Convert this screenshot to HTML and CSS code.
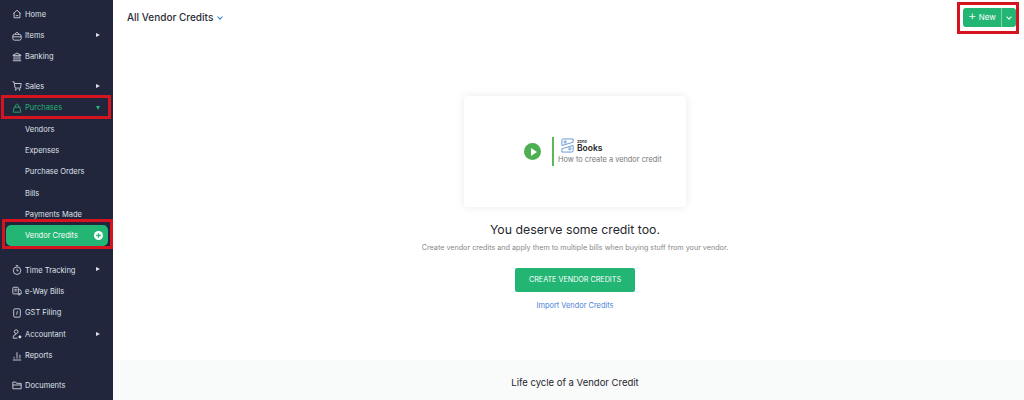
FILE: index.html
```html
<!DOCTYPE html>
<html>

<head>
    <meta charset="UTF-8">
    <title>All Vendor Credits</title>
    <link rel="stylesheet" href="styles.css">
</head>

<body>
    <div class="app">
        <!-- Sidebar -->
        <nav class="sidebar">
            <ul class="nav-group">
                <li class="nav-item">
                    <svg class="nav-icon" viewBox="0 0 12 12"><path d="M1.5 5.5 6 1.500l4.500 4M2.500 4.800v5.700h7V4.800M4.500 8h3"/></svg>
                    Home
                </li>
                <li class="nav-item">
                    <svg class="nav-icon" viewBox="0 0 12 12"><rect x="1" y="4" width="10" height="7" rx="2"/><path d="M4 4c0-3 4-3 4 0M1 7h10"/></svg>
                    Items
                    <span class="arrow-right"></span>
                </li>
                <li class="nav-item">
                    <svg class="nav-icon" viewBox="0 0 12 12"><path d="M1 4 6 1.200l5 2.800zM2.500 4.500v5M4.800 4.500v5M7.200 4.500v5M9.500 4.500v5M1 10.500h10"/></svg>
                    Banking
                </li>
            </ul>
            <ul class="nav-group">
                <li class="nav-item">
                    <svg class="nav-icon" viewBox="0 0 12 12"><path d="M.5 1h2l1.200 7.500h6.500L11 3H3"/><circle cx="4.500" cy="10.500" r=".6"/><circle cx="9" cy="10.500" r=".6"/></svg>
                    Sales
                    <span class="arrow-right"></span>
                </li>
                <li class="nav-item nav-active">
                    <svg class="nav-icon" viewBox="0 0 12 12"><path d="M2.500 5h7l1 6h-9zM4 5c0-5 4-5 4 0"/></svg>
                    Purchases
                    <span class="arrow-down"></span>
                </li>
                <li class="nav-item nav-sub">Vendors</li>
                <li class="nav-item nav-sub">Expenses</li>
                <li class="nav-item nav-sub">Purchase Orders</li>
                <li class="nav-item nav-sub">Bills</li>
                <li class="nav-item nav-sub">Payments Made</li>
                <li class="nav-item nav-sub nav-selected">
                    Vendor Credits
                    <svg class="plus-circle" viewBox="0 0 10 10"><circle cx="5" cy="5" r="5" fill="#fff"/><path d="M5 2.500v5M2.500 5h5" stroke="#22b573" stroke-width="1.400"/></svg>
                </li>
            </ul>
            <ul class="nav-group">
                <li class="nav-item">
                    <svg class="nav-icon" viewBox="0 0 12 12"><circle cx="6" cy="6.800" r="4.500"/><path d="M6 4.500v2.500h1.800M4.500 .8h3"/></svg>
                    Time Tracking
                    <span class="arrow-right"></span>
                </li>
                <li class="nav-item">
                    <svg class="nav-icon" viewBox="0 0 12 12"><rect x="1" y="1.500" width="6.500" height="8" rx="1"/><path d="M7.500 4.500H10l1 2v3H9M2.800 4h3M2.800 6h3"/><circle cx="8.500" cy="10" r="1"/></svg>
                    e-Way Bills
                </li>
                <li class="nav-item">
                    <svg class="nav-icon" viewBox="0 0 12 12"><rect x="2" y="1" width="8" height="10" rx="1.500"/><path d="M6.500 3.800 5.500 8"/></svg>
                    GST Filing
                </li>
                <li class="nav-item">
                    <svg class="nav-icon" viewBox="0 0 12 12"><circle cx="5" cy="3.200" r="2.200"/><path d="M1.500 11V9.500c0-2 1.500-2.800 3.500-2.800M1.500 11h5"/><circle class="icon-fill" cx="9.500" cy="9.500" r="1.300"/></svg>
                    Accountant
                    <span class="arrow-right"></span>
                </li>
                <li class="nav-item">
                    <svg class="nav-icon" viewBox="0 0 12 12"><path d="M1 10.800h10M2.500 9V7M6 9V1.500M9.500 9V4.500"/></svg>
                    Reports
                </li>
            </ul>
            <ul class="nav-group">
                <li class="nav-item">
                    <svg class="nav-icon" viewBox="0 0 12 12"><path d="M1 10V2.500h3.500l1 1.500H11v6.500H1zM1 6h10"/></svg>
                    Documents
                </li>
            </ul>
            <!-- red highlight boxes -->
            <div class="mark mark-purchases"></div>
            <div class="mark mark-credits"></div>
        </nav>

        <!-- Main content -->
        <main class="content">
            <header class="topbar">
                <h1 class="page-title">All Vendor Credits <span class="title-caret"></span></h1>
                <div class="new-wrap">
                    <div class="new-btn">
                        <span class="new-label"><span class="new-plus">+</span> New</span>
                        <span class="new-drop"><span class="drop-caret"></span></span>
                    </div>
                </div>
            </header>

            <section class="empty">
                <div class="video-card">
                    <span class="play"><span class="play-tri"></span></span>
                    <span class="video-rule"></span>
                    <div class="video-info">
                        <div class="brand">
                            <svg class="brand-logo" viewBox="0 0 16 16"><path d="M2.500 1H14v3.500L2 8V2.500A1.500 1.500 0 0 1 2.500 1z"/><path d="M14 8v5.500a1.500 1.500 0 0 1-1.500 1.500H2v-3.500z"/><circle cx="5.500" cy="4.200" r="1.200"/><circle cx="10.500" cy="11.500" r="1.200"/></svg>
                            <div class="brand-name"><small>Zoho</small>Books</div>
                        </div>
                        <p class="video-text">How to create a vendor credit</p>
                    </div>
                </div>
                <h2 class="empty-title">You deserve some credit too.</h2>
                <p class="empty-text">Create vendor credits and apply them to multiple bills when buying stuff from your vendor.</p>
                <div class="create-btn">CREATE VENDOR CREDITS</div>
                <a class="import-link">Import Vendor Credits</a>
            </section>

            <section class="lifecycle">Life cycle of a Vendor Credit</section>
        </main>
    </div>
</body>

</html>
```

FILE: styles.css
```css
* {
    box-sizing: border-box;
}

html,
body {
    height: 400px;
    margin: 0;
    overflow: hidden;
}

body {
    font-family: Inter, "Liberation Sans", sans-serif;
    background-color: #fff;
}

.app {
    display: flex;
    height: 400px;
}

/* Sidebar */
.sidebar {
    position: relative;
    flex: 0 0 113px;
    padding-top: 3.500px;
    background-color: #21263c;
    color: #dfe1e8;
    font-size: 7.500px;
}

.nav-group {
    list-style: none;
    margin: 0 0 8px 0;
    padding: 0;
}

.nav-group:nth-child(2) {
    margin-bottom: 13px;
}

.nav-group:nth-child(4) {
    margin-top: 8px;
}

.nav-item {
    display: flex;
    align-items: center;
    height: 21.4px;
    padding-left: 12px;
    position: relative;
}

.nav-icon {
    width: 10px;
    height: 10px;
    margin-right: 3px;
    fill: none;
    stroke: currentColor;
    stroke-width: 1;
}

.icon-fill {
    fill: currentColor;
}

.nav-sub {
    padding-left: 25px;
}

.nav-active {
    color: #22b573;
}

.nav-selected {
    height: 21px;
    margin: 0 5px 0 6px;
    padding-left: 19px;
    border-radius: 5px;
    background-color: #22b573;
    color: #fff;
}

.plus-circle {
    position: absolute;
    right: 5px;
    top: 6px;
    width: 9px;
    height: 9px;
}

.arrow-right {
    position: absolute;
    left: 96px;
    top: 8px;
    border-left: 4px solid #dfe1e8;
    border-top: 2.500px solid transparent;
    border-bottom: 2.500px solid transparent;
}

.arrow-down {
    position: absolute;
    left: 96px;
    top: 9px;
    border-top: 4px solid #22b573;
    border-left: 2.500px solid transparent;
    border-right: 2.500px solid transparent;
}

.mark {
    position: absolute;
    border: 3px solid #d5141f;
}

.mark-purchases {
    left: 1px;
    top: 95px;
    width: 110px;
    height: 24px;
}

.mark-credits {
    left: 2px;
    top: 219px;
    width: 111px;
    height: 30px;
}

/* Main content */
.content {
    flex: 1;
    display: flex;
    flex-direction: column;
    min-width: 0;
}

.topbar {
    display: flex;
    justify-content: space-between;
    align-items: flex-start;
    height: 36px;
    padding: 2px 5px 0 14px;
}

.page-title {
    margin: 9px 0 0 0;
    font-size: 10px;
    font-weight: 500;
    color: #2b2d38;
}

.title-caret {
    display: inline-block;
    width: 4px;
    height: 4px;
    margin: 0 0 2px 2px;
    border-right: 1.500px solid #2f7fd0;
    border-bottom: 1.500px solid #2f7fd0;
    transform: rotate(45deg);
}

.new-wrap {
    width: 62px;
    height: 32px;
    padding: 3px 0 3px 3px;
    border: 3px solid #d5141f;
}

.new-btn {
    display: flex;
    height: 19px;
    border-radius: 3px;
    background-color: #22b573;
    color: #fff;
    font-size: 8px;
    line-height: 19px;
}

.new-label {
    flex: 1;
    white-space: nowrap;
    padding-left: 5px;
}

.new-plus {
    font-size: 13px;
    font-weight: 300;
    line-height: 12px;
}

.new-drop {
    flex: 0 0 15px;
    display: flex;
    justify-content: center;
    align-items: center;
    border-left: 1px solid #7fd4ac;
}

.drop-caret {
    width: 4px;
    height: 4px;
    margin-bottom: 2px;
    border-right: 1px solid #fff;
    border-bottom: 1px solid #fff;
    transform: rotate(45deg);
}

.empty {
    flex: 1;
    display: flex;
    flex-direction: column;
    align-items: center;
    padding: 60px 0 0 13px;
}

.video-card {
    display: flex;
    align-items: center;
    width: 222px;
    height: 111px;
    padding-left: 60px;
    border-radius: 4px;
    background-color: #fff;
    box-shadow: 0 0 10px rgba(0, 0, 0, .09);
}

.play {
    display: flex;
    justify-content: center;
    align-items: center;
    width: 17px;
    height: 17px;
    border-radius: 50%;
    background-color: #4caf50;
}

.play-tri {
    margin-left: 2px;
    border-left: 6px solid #fff;
    border-top: 4px solid transparent;
    border-bottom: 4px solid transparent;
}

.video-rule {
    flex: 0 0 2px;
    height: 29px;
    margin: 0 4px 0 11px;
    background-color: #5cb85c;
}

.video-info {
    margin-bottom: 1px;
}

.brand {
    display: flex;
    align-items: center;
    padding-left: 2px;
}

.brand-logo {
    width: 15px;
    height: 15px;
    margin-right: 2px;
    fill: none;
    stroke: #3d7fd0;
    stroke-width: .8;
}

.brand-name {
    font-size: 8.500px;
    font-weight: 600;
    line-height: 8px;
    color: #1d1d1d;
}

.brand-name small {
    display: block;
    font-size: 4px;
    line-height: 4px;
}

.video-text {
    margin: 2px 0 0 0;
    font-size: 7.400px;
    white-space: nowrap;
    color: #777;
}

.empty-title {
    margin: 15px 0 0 0;
    font-size: 12.300px;
    line-height: 15px;
    font-weight: 400;
    color: #26272e;
}

.empty-text {
    margin: 6px 0 0 0;
    font-size: 7.200px;
    line-height: 9px;
    color: #888;
}

.create-btn {
    width: 120px;
    height: 24px;
    margin-top: 16px;
    border-radius: 2px;
    background-color: #22b573;
    color: #fff;
    font-size: 7.200px;
    line-height: 24px;
    text-align: center;
}

.import-link {
    margin-top: 9px;
    font-size: 7.400px;
    line-height: 9px;
    color: #4a7fd6;
}

.lifecycle {
    height: 40px;
    padding: 17px 0 0 13px;
    background-color: #f9fafa;
    color: #26272e;
    font-size: 9.500px;
    text-align: center;
}
```
